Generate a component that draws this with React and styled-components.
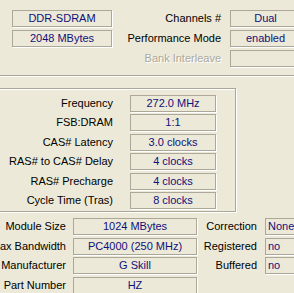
import styled, { createGlobalStyle } from 'styled-components';

const GlobalStyle = createGlobalStyle`
  html, body {
    margin: 0;
    padding: 0;
    background: #ece9d8;
  }
  body {
    font-family: "Liberation Sans", Arial, sans-serif;
    font-size: 11px;
    color: #000;
  }
`;

const Window = styled.div`
  width: 294px;
  height: 293px;
  overflow: hidden;
  background: #ece9d8;
  display: flex;
  flex-direction: column;
`;

const GeneralBox = styled.section`
  height: 76px;
  box-sizing: border-box;
  border-bottom: 1px solid #aca899;
  box-shadow: 0 1px 0 #fff;
  padding: 10px 0 0 12px;
  display: grid;
  grid-template-columns: 100px 118px 71px;
  grid-auto-rows: 17px;
  row-gap: 3px;
  flex-shrink: 0;
`;

const TimingsBox = styled.section`
  margin: 12px 0 0 -3px;
  width: 239px;
  height: 124px;
  box-sizing: border-box;
  border: 1px solid #aca899;
  box-shadow: inset 1px 1px 0 #fff, 1px 1px 0 #fff;
  padding-top: 6px;
  display: grid;
  grid-template-columns: 132px 86px;
  grid-auto-rows: 17px;
  row-gap: 2.4px;
  flex-shrink: 0;
`;

const ModuleBox = styled.section`
  margin-top: 6px;
  display: grid;
  grid-template-columns: 73px 124px 68px 60px;
  grid-auto-rows: 17px;
  row-gap: 2.7px;
  flex-shrink: 0;
`;

const Label = styled.div`
  display: flex;
  justify-content: flex-end;
  min-width: 0;
  line-height: 17px;
  white-space: nowrap;
  padding-right: ${p => p.$pad || 0}px;
  color: ${p => (p.$disabled ? '#aca899' : '#000')};
  text-shadow: ${p => (p.$disabled ? '1px 1px 0 #fff' : 'none')};
`;

const Field = styled.div`
  box-sizing: border-box;
  height: 17px;
  border: 1px solid #aca899;
  box-shadow: 1px 1px 0 #fff;
  color: #10107a;
  text-align: ${p => (p.$left ? 'left' : 'center')};
  padding-left: ${p => (p.$left ? 2 : 0)}px;
  line-height: 15px;
  white-space: nowrap;
  overflow: hidden;
`;

const Empty = styled.div``;

const timings = [
  ['Frequency', '272.0 MHz'],
  ['FSB:DRAM', '1:1'],
  ['CAS# Latency', '3.0 clocks'],
  ['RAS# to CAS# Delay', '4 clocks'],
  ['RAS# Precharge', '4 clocks'],
  ['Cycle Time (Tras)', '8 clocks'],
];

const modules = [
  ['Module Size', '1024 MBytes', 'Correction', 'None'],
  ['Max Bandwidth', 'PC4000 (250 MHz)', 'Registered', 'no'],
  ['Manufacturer', 'G Skill', 'Buffered', 'no'],
  ['Part Number', 'HZ', null, null],
];

export default function App() {
  return (
    <Window>
      <GlobalStyle />
      <GeneralBox>
        <Field>DDR-SDRAM</Field>
        <Label $pad={9}>Channels #</Label>
        <Field>Dual</Field>
        <Field>2048 MBytes</Field>
        <Label $pad={9}>Performance Mode</Label>
        <Field>enabled</Field>
        <Empty />
        <Label $pad={9} $disabled>Bank Interleave</Label>
        <Field />
      </GeneralBox>

      <TimingsBox>
        {timings.map(([label, value]) => [
          <Label key={label} $pad={17}>{label}</Label>,
          <Field key={label + '-v'}>{value}</Field>,
        ])}
      </TimingsBox>

      <ModuleBox>
        {modules.map(([label, value, label2, value2]) => [
          <Label key={label} $pad={7}>{label}</Label>,
          <Field key={label + '-v'}>{value}</Field>,
          label2 ? <Label key={label2} $pad={8}>{label2}</Label> : <Empty key={label + '-e1'} />,
          label2 ? <Field key={label2 + '-v'} $left>{value2}</Field> : <Empty key={label + '-e2'} />,
        ])}
      </ModuleBox>
    </Window>
  );
}
